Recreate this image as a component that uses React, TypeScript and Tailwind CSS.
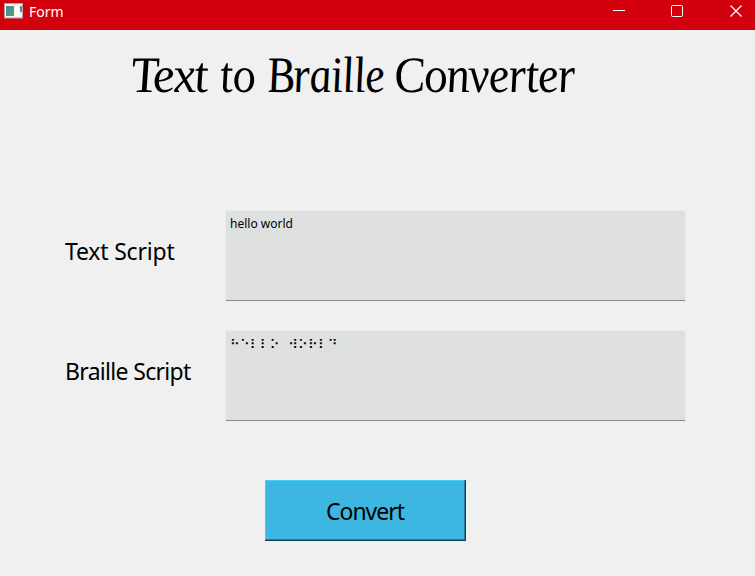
import React from "react";

function TitleBar() {
  return (
    <header className="flex h-[30px] shrink-0 items-start bg-[#d3000d] text-white">
      <svg className="ml-[4px] mt-[3px]" width="19" height="16" viewBox="0 0 19 16">
        <defs>
          <linearGradient id="pane" x1="0" y1="0" x2="1" y2="1">
            <stop offset="0" stopColor="#4c7fa6" />
            <stop offset="1" stopColor="#4fa86c" />
          </linearGradient>
        </defs>
        <rect x="0.5" y="0.5" width="18" height="14.5" fill="#f4f4f4" stroke="#b8a0a0" />
        <rect x="2" y="3" width="8" height="10" fill="url(#pane)" />
        <rect x="11" y="3" width="4" height="10" fill="#fff" />
        <rect x="16" y="3" width="2" height="6" fill="url(#pane)" />
      </svg>
      <span className="ml-[6px] mt-[1px] text-[14px] leading-[21px]">Form</span>
      <svg className="ml-auto" width="142" height="22" viewBox="613 0 142 22" fill="none" stroke="#fff" strokeWidth="1">
        <path d="M613 10.5h12" />
        <rect x="671.5" y="5.5" width="11" height="11" rx="1" />
        <path d="M730.5 5.5l11 11M741.5 5.5l-11 11" strokeWidth="1.2" />
      </svg>
    </header>
  );
}

function Field({ label, value, labelClass, valueClass }: { label: string; value: string; labelClass: string; valueClass: string }) {
  return (
    <div className="flex h-[92px]">
      <div className={"w-[160px] whitespace-nowrap pt-[25px] text-[23px] leading-[32px] " + labelClass}>{label}</div>
      <div className="h-[92px] w-[461px] border border-b-0 border-[#ebebeb]">
        <div className={"h-[90px] border-b border-[#868a89] bg-[#dfe1e0] pl-[4px] " + valueClass}>{value}</div>
      </div>
    </div>
  );
}

export default function App() {
  return (
    <div className="flex h-[576px] w-[755px] flex-col overflow-hidden bg-[#f0f0f0] font-['Noto_Sans','DejaVu_Sans',sans-serif] text-black">
      <TitleBar />
      <h1 className="ml-[132px] mt-[18px] flex h-[72px] whitespace-nowrap font-['Liberation_Serif',serif] text-[51px] italic leading-[54px]">
        <span className="w-[89px] origin-[0_42px] [transform:skewX(6deg)_scaleX(0.98)]"><span className="tracking-[-1.5px]">Text</span></span>
        <span className="w-[47px] origin-[0_42px] [transform:skewX(6deg)_scaleX(0.9)]">to</span>
        <span className="w-[127px] origin-[0_42px] [transform:skewX(6deg)_scaleX(0.87)]"><span className="tracking-[-1px]">Braille</span></span>
        <span className="origin-[0_42px] [transform:skewX(6deg)_scaleX(0.915)]"><span className="tracking-[-1px]">Converter</span></span>
      </h1>
      <main className="flex flex-col pl-[65px] pt-[90px]">
        <Field label="Text Script" value="hello world" labelClass="tracking-[-0.2px]" valueClass="pt-[4px] text-[12px] leading-[17px]" />
        <div className="h-[28px]" />
        <Field
          label="Braille Script"
          value="⠓⠑⠇⠇⠕ ⠺⠕⠗⠇⠙"
          labelClass="tracking-[-0.68px]"
          valueClass="pt-[5px] font-['DejaVu_Sans',sans-serif] text-[13px] leading-[18px] tracking-[0.4px] [word-spacing:4px]"
        />
        <button className="ml-[200px] mt-[58px] flex h-[61px] w-[201px] items-center justify-center border-b border-r border-[#163f50] bg-[#3eb6e2] text-[23px] tracking-[-1px]">
          <span className="flex h-full w-full items-center justify-center border border-b-[#267b9b] border-l-[#45cdff] border-r-[#267b9b] border-t-[#45cdff] pt-[2px]">
            Convert
          </span>
        </button>
      </main>
    </div>
  );
}
